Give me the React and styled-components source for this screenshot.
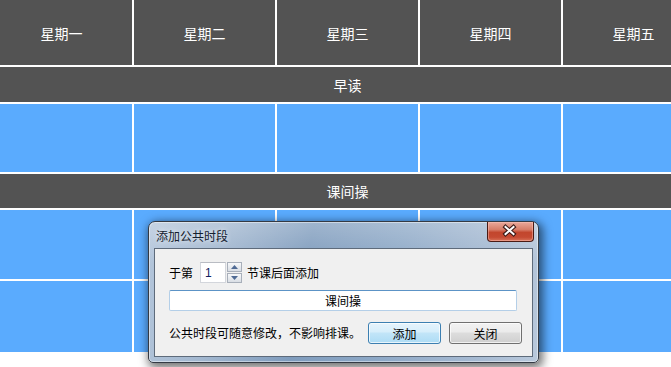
import styled, { createGlobalStyle } from "styled-components";

const days = ["星期一", "星期二", "星期三", "星期四", "星期五"];

const GlobalStyle = createGlobalStyle`
    html, body {
        margin: 0;
        padding: 0;
        background: #ffffff;
        overflow: hidden;
    }
    body {
        font-family: "Noto Sans CJK SC", "Noto Sans", sans-serif;
    }
`;

const App = () => {
    return (
        <>
            <GlobalStyle />
            <Page>
                <Timetable>
                    {days.map((day) => (
                        <HeaderCell key={day}>{day}</HeaderCell>
                    ))}
                    <PublicRow>早读</PublicRow>
                    {days.map((day) => (
                        <ClassCell key={"a" + day} />
                    ))}
                    <PublicRow>课间操</PublicRow>
                    {days.map((day) => (
                        <ClassCell key={"b" + day} />
                    ))}
                    {days.map((day) => (
                        <ClassCell key={"c" + day} />
                    ))}
                </Timetable>

                <Window>
                    <TitleBar>
                        <Title>添加公共时段</Title>
                        <CloseButton>
                            <svg width="47" height="20" viewBox="0 0 47 20">
                                <path
                                    d="M19.5 6 L27.5 13 M27.5 6 L19.5 13"
                                    stroke="#3b1a17"
                                    strokeWidth="4.2"
                                    strokeLinecap="square"
                                    fill="none"
                                />
                                <path
                                    d="M19.5 6 L27.5 13 M27.5 6 L19.5 13"
                                    stroke="#ffffff"
                                    strokeWidth="2"
                                    strokeLinecap="square"
                                    fill="none"
                                />
                            </svg>
                        </CloseButton>
                    </TitleBar>
                    <Client>
                        <SpinRow>
                            <Label>于第</Label>
                            <SpinInput>1</SpinInput>
                            <SpinButtons>
                                <SpinButton>
                                    <svg width="7" height="4" viewBox="0 0 7 4">
                                        <path d="M0 4 L3.5 0 L7 4 Z" fill="#4f6a94" />
                                    </svg>
                                </SpinButton>
                                <SpinButton>
                                    <svg width="7" height="4" viewBox="0 0 7 4">
                                        <path d="M0 0 L3.5 4 L7 0 Z" fill="#4f6a94" />
                                    </svg>
                                </SpinButton>
                            </SpinButtons>
                            <Label>节课后面添加</Label>
                        </SpinRow>
                        <NameInput>课间操</NameInput>
                        <ActionRow>
                            <Label>公共时段可随意修改，不影响排课。</Label>
                            <Buttons>
                                <Button $primary>添加</Button>
                                <Button>关闭</Button>
                            </Buttons>
                        </ActionRow>
                    </Client>
                </Window>
            </Page>
        </>
    );
};

export default App;

const Page = styled.div`
    position: relative;
    width: 671px;
    height: 367px;
    overflow: hidden;
    background: #ffffff;
`;

const Timetable = styled.div`
    display: grid;
    grid-template-columns: repeat(5, 141px);
    grid-template-rows: 65px 35px 68px 34px 69px 71px;
    gap: 2px;
    width: 713px;
    margin-left: -9px;
    background: #ffffff;
`;

const HeaderCell = styled.div`
    display: flex;
    align-items: center;
    justify-content: center;
    background: #535353;
    color: #ffffff;
    font-size: 14px;
`;

const PublicRow = styled.div`
    grid-column: 1 / -1;
    display: flex;
    align-items: center;
    justify-content: center;
    background: #535353;
    color: #ffffff;
    font-size: 14px;
`;

const ClassCell = styled.div`
    background: #5aabfe;
`;

const Window = styled.div`
    position: absolute;
    left: 148px;
    top: 221px;
    width: 391px;
    height: 142px;
    box-sizing: border-box;
    display: flex;
    flex-direction: column;
    padding: 0 5px 5px 5px;
    border: 1px solid #343a44;
    border-radius: 7px 7px 5px 5px;
    background:
        linear-gradient(180deg, rgba(255, 255, 255, 0.25) 0%, rgba(255, 255, 255, 0) 30%),
        linear-gradient(100deg, #b4c6db 0%, #a3b8d0 18%, #7f9cbd 40%, #8ea9c7 62%, #a6bad2 85%, #b9c9dc 100%);
    box-shadow:
        inset 0 0 0 1px rgba(255, 255, 255, 0.45),
        2px 3px 10px 2px rgba(0, 0, 0, 0.55);
`;

const TitleBar = styled.div`
    position: relative;
    height: 26px;
    display: flex;
    align-items: center;
    padding-left: 2px;
`;

const Title = styled.div`
    font-size: 12px;
    color: #14202e;
    text-shadow: 0 0 5px rgba(255, 255, 255, 0.9);
    margin-top: 1px;
`;

const CloseButton = styled.div`
    position: absolute;
    right: -1px;
    top: 0;
    width: 47px;
    height: 20px;
    box-sizing: border-box;
    border: 1px solid #4a1a14;
    border-top: none;
    border-radius: 0 0 4px 4px;
    background: linear-gradient(180deg, #e9a99b 0%, #d77d68 40%, #c2462d 55%, #c54a32 80%, #d8735a 100%);
    box-shadow: inset 0 0 0 1px rgba(255, 200, 190, 0.45);
    display: flex;
    align-items: center;
    justify-content: center;

    svg {
        display: block;
        margin-left: -2px;
        margin-top: -1px;
    }
`;

const Client = styled.div`
    flex: 1;
    display: flex;
    flex-direction: column;
    box-sizing: border-box;
    padding: 13px 15px 12px 14px;
    border: 1px solid #5e6b7b;
    background: #f0f0f0;
    font-size: 12px;
    color: #000000;
`;

const SpinRow = styled.div`
    display: flex;
    align-items: center;
    height: 21px;
`;

const Label = styled.span`
    font-size: 12px;
    line-height: 16px;
    color: #000000;
    white-space: nowrap;
`;

const SpinInput = styled.div`
    width: 26px;
    height: 21px;
    box-sizing: border-box;
    margin-left: 7px;
    padding-left: 4px;
    display: flex;
    align-items: center;
    background: #ffffff;
    border: 1px solid #d3d6dc;
    border-top-color: #b9bcc3;
    font-family: "Liberation Sans", sans-serif;
    font-size: 12px;
    color: #102060;
`;

const SpinButtons = styled.div`
    display: flex;
    flex-direction: column;
    gap: 1px;
    margin-left: 1px;
    margin-right: 5px;
`;

const SpinButton = styled.div`
    width: 15px;
    height: 10px;
    box-sizing: border-box;
    border: 1px solid #a8afba;
    background: linear-gradient(180deg, #f7f8fa 0%, #e8ebef 50%, #d9dee5 100%);
    display: flex;
    align-items: center;
    justify-content: center;

    svg {
        display: block;
    }
`;

const NameInput = styled.div`
    margin-top: 7px;
    height: 21px;
    box-sizing: border-box;
    display: flex;
    align-items: center;
    justify-content: center;
    background: #ffffff;
    border: 1px solid #b4cfe8;
    border-top-color: #5c93c6;
    border-radius: 2px;
    font-size: 12px;
`;

const ActionRow = styled.div`
    margin-top: 11px;
    height: 22px;
    display: flex;
    align-items: center;
`;

const Buttons = styled.div`
    display: flex;
    gap: 8px;
    margin-left: auto;
    margin-right: -5px;
`;

const Button = styled.div`
    width: 73px;
    height: 22px;
    box-sizing: border-box;
    display: flex;
    align-items: center;
    justify-content: center;
    border-radius: 3px;
    font-size: 12px;
    color: #000000;
    border: 1px solid ${(props) => (props.$primary ? "#3c7fb1" : "#707070")};
    background: ${(props) =>
        props.$primary
            ? "linear-gradient(180deg, #e6f4fc 0%, #d6eefb 45%, #c2e5f8 50%, #addcf5 100%)"
            : "linear-gradient(180deg, #f2f2f2 0%, #ebebeb 45%, #dddddd 50%, #cfcfcf 100%)"};
    box-shadow: inset 0 0 0 1px rgba(255, 255, 255, 0.7);
`;
